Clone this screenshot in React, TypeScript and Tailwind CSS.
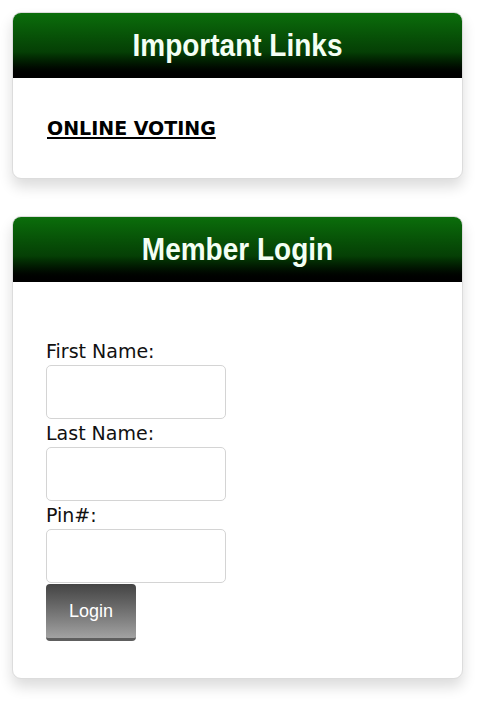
import { ReactNode } from 'react';

interface PanelProps {
  title: string;
  children: ReactNode;
  bodyClass?: string;
}

function Panel({ title, children, bodyClass }: PanelProps) {
  return (
    <div className="w-[451px] rounded-[9px] border border-[#dcdcdc] bg-white shadow-[0_8px_14px_rgba(0,0,0,0.14)]">
      {/* Header */}
      <div className="flex h-[65px] items-center justify-center rounded-t-[8px] bg-gradient-to-b from-[#0b6e0b] via-[#053f05] via-60% to-black">
        <h2 className="scale-y-110 text-[28px] font-bold leading-none text-[#f4fff4] [font-family:'Liberation_Sans',Arial,sans-serif]">
          {title}
        </h2>
      </div>
      <div className={bodyClass}>{children}</div>
    </div>
  );
}

function Field({ label }: { label: string }) {
  return (
    <div className="flex flex-col">
      <label className="text-[19px] leading-[28px] text-[#111]">{label}</label>
      <input
        type="text"
        className="h-[54px] w-[180px] rounded-[5px] border border-[#d4d4d4] bg-white outline-none"
      />
    </div>
  );
}

export default function App() {
  return (
    <div className="min-h-[711px] bg-white pt-3 [font-family:'DejaVu_Sans',Verdana,sans-serif]">
      <div className="ml-3 flex flex-col gap-[37px]">
        <Panel title="Important Links" bodyClass="px-[34px] pt-[38px] pb-[36px]">
          <a
            href="#"
            className="text-[19px] font-bold leading-[24px] text-black underline decoration-2 underline-offset-2"
          >
            ONLINE VOTING
          </a>
        </Panel>

        {/* Member login */}
        <Panel title="Member Login" bodyClass="px-[33px] pt-[55px] pb-[37px]">
          <form className="flex flex-col" onSubmit={(e) => e.preventDefault()}>
            <Field label="First Name:" />
            <Field label="Last Name:" />
            <Field label="Pin#:" />
            <button
              type="submit"
              className="mt-px h-[57px] w-[90px] rounded-[4px] border-b-[3px] border-[#5e5e5e] bg-gradient-to-b from-[#444] to-[#a2a2a2] text-[18px] text-white [font-family:'Liberation_Sans',Arial,sans-serif]"
            >
              Login
            </button>
          </form>
        </Panel>
      </div>
    </div>
  );
}
